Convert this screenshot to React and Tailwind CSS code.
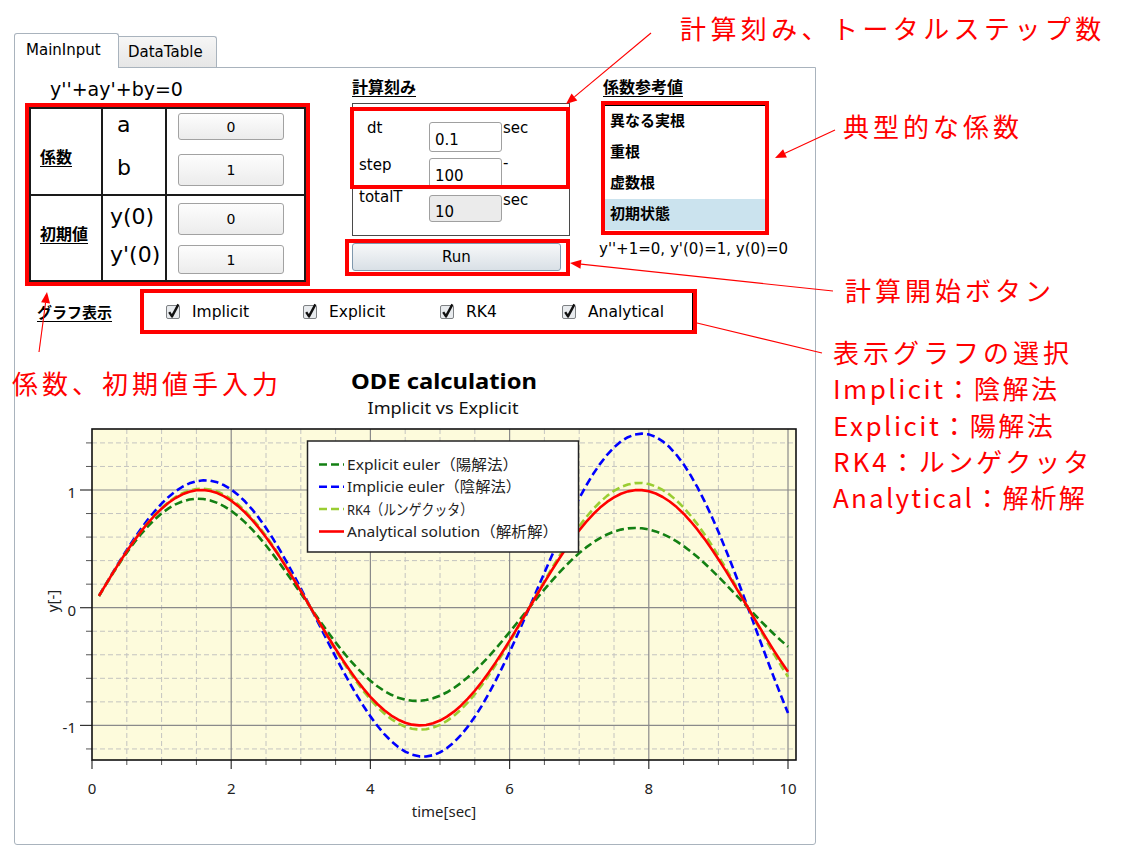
import React from "react";

const X = (t) => 92 + t * 69.6;
const Y = (v) => 607.7 - v * 117.7;

function curve(k) {
  let d = "";
  for (let i = 1; i <= 100; i++) {
    const t = i * 0.1;
    const v = Math.exp(k * t) * Math.sin(t);
    d += (i === 1 ? "M" : "L") + X(t).toFixed(2) + " " + Y(v).toFixed(2) + " ";
  }
  return d;
}

function Arrow({ x1, y1, x2, y2, head = true }) {
  const dx = x2 - x1;
  const dy = y2 - y1;
  const L = Math.hypot(dx, dy);
  const ux = dx / L;
  const uy = dy / L;
  const hl = 11;
  const hw = 4.5;
  const bx = x2 - ux * hl;
  const by = y2 - uy * hl;
  const pts = `${x2},${y2} ${bx - uy * hw},${by + ux * hw} ${bx + uy * hw},${by - ux * hw}`;
  return (
    <g>
      <line x1={x1} y1={y1} x2={head ? bx : x2} y2={head ? by : y2} stroke="#ff0000" strokeWidth="1.1" />
      {head && <polygon points={pts} fill="#ff0000" />}
    </g>
  );
}

function Chart() {
  const minorX = [];
  for (let i = 1; i <= 20; i++) if (i % 4 !== 0) minorX.push(i * 0.5);
  const majorX = [2, 4, 6, 8, 10];
  const minorY = [-1.2, -0.8, -0.6, -0.4, -0.2, 0.2, 0.4, 0.6, 0.8, 1.2, 1.4];
  const majorY = [-1, 0, 1];
  const top = 429;
  const bottom = 760;
  const left = 92;
  const right = 796;
  const legend = [
    { c: "#138013", dash: "8 4", label: "Explicit euler（陽解法）", y: 464.5, w: 171 },
    { c: "#0000ff", dash: "8 4", label: "Implicie euler（陰解法）", y: 486.8, w: 174 },
    { c: "#9acd32", dash: "8 4", label: "RK4（ルンゲクッタ）", y: 509, w: 126 },
    { c: "#ff0000", dash: null, label: "Analytical solution（解析解）", y: 531.5, w: 211 },
  ];
  const ff = "'Noto Sans','Noto Sans CJK JP',sans-serif";
  return (
    <svg width="800" height="504" viewBox="15 340 800 504" className="block" fontFamily={ff}>
      <defs>
        <clipPath id="plotclip">
          <rect x={left} y={top} width={right - left} height={bottom - top} />
        </clipPath>
      </defs>
      <text x="444" y="388.5" textAnchor="middle" fontSize="22" fontWeight="700" fill="#000" textLength="186" lengthAdjust="spacingAndGlyphs">
        ODE calculation
      </text>
      <text x="443" y="414" textAnchor="middle" fontSize="16" fill="#111" textLength="151" lengthAdjust="spacingAndGlyphs">
        Implicit vs Explicit
      </text>
      <rect x={left} y={top} width={right - left} height={bottom - top} fill="#fdfbdc" />
      {minorX.map((t) => (
        <line key={"mx" + t} x1={X(t)} x2={X(t)} y1={top} y2={bottom} stroke="#c4c4c0" strokeWidth="1" strokeDasharray="5 3" />
      ))}
      {minorY.map((v) => (
        <line key={"my" + v} x1={left} x2={right} y1={Y(v)} y2={Y(v)} stroke="#c4c4c0" strokeWidth="1" strokeDasharray="5 3" />
      ))}
      {majorX.map((t) => (
        <line key={"Mx" + t} x1={X(t)} x2={X(t)} y1={top} y2={bottom} stroke="#8a8a8a" strokeWidth="1.2" />
      ))}
      {majorY.map((v) => (
        <line key={"My" + v} x1={left} x2={right} y1={Y(v)} y2={Y(v)} stroke="#8a8a8a" strokeWidth="1.2" />
      ))}
      {minorY.map((v) => (
        <line key={"ty" + v} x1={86} x2={left} y1={Y(v)} y2={Y(v)} stroke="#555" strokeWidth="1" />
      ))}
      {majorY.map((v) => (
        <line key={"tY" + v} x1={80} x2={left} y1={Y(v)} y2={Y(v)} stroke="#333" strokeWidth="1.2" />
      ))}
      {minorX.map((t) => (
        <line key={"tx" + t} x1={X(t)} x2={X(t)} y1={bottom} y2={bottom + 5} stroke="#555" strokeWidth="1" />
      ))}
      {[0, 2, 4, 6, 8, 10].map((t) => (
        <line key={"tX" + t} x1={X(t)} x2={X(t)} y1={bottom} y2={bottom + 9} stroke="#333" strokeWidth="1.2" />
      ))}
      <rect x={left} y={top} width={right - left} height={bottom - top} fill="none" stroke="#111" strokeWidth="1.6" />
      <g clipPath="url(#plotclip)" fill="none" strokeLinecap="butt" strokeLinejoin="round">
        <path d={curve(0.0497)} stroke="#0000ff" strokeWidth="2.6" strokeDasharray="8 4" />
        <path d={curve(-0.0497)} stroke="#138013" strokeWidth="2.6" strokeDasharray="8 4" />
        <path d={curve(0.0075)} stroke="#9acd32" strokeWidth="2.6" strokeDasharray="8 4" />
        <path d={curve(0)} stroke="#ff0000" strokeWidth="2.6" />
      </g>
      {[1, 0, -1].map((v) => (
        <text key={"ly" + v} x="76" y={Y(v) + 8} textAnchor="end" fontSize="15" fill="#222">
          {v}
        </text>
      ))}
      {[0, 2, 4, 6, 8, 10].map((t) => (
        <text key={"lx" + t} x={X(t)} y="793.5" textAnchor="middle" fontSize="15" fill="#222">
          {t}
        </text>
      ))}
      <text x="444" y="817" textAnchor="middle" fontSize="15" fill="#222">
        time[sec]
      </text>
      <text x="0" y="0" transform="translate(58 601) rotate(-90)" textAnchor="middle" fontSize="15" fill="#222">
        y[-]
      </text>
      <rect x="307.5" y="441" width="271" height="111" fill="#ffffff" stroke="#222" strokeWidth="1.5" />
      {legend.map((e) => (
        <g key={e.label}>
          <line x1="319" x2="344" y1={e.y} y2={e.y} stroke={e.c} strokeWidth="2.6" strokeDasharray={e.dash || undefined} />
          <text x="347" y={e.y + 5.5} fontSize="15" fill="#222" textLength={e.w} lengthAdjust="spacingAndGlyphs">
            {e.label}
          </text>
        </g>
      ))}
    </svg>
  );
}

function ValueBox({ className, children }) {
  return (
    <div className={"w-[106px] flex items-center justify-center border border-[#a2a2a2] rounded-[3px] bg-gradient-to-b from-[#fdfdfd] to-[#ececec] text-[14px] leading-[16px] " + className}>
      {children}
    </div>
  );
}

function Check({ label, w }) {
  return (
    <div className={"flex items-center " + w}>
      <svg width="14" height="14" viewBox="0 0 14 14" className="overflow-visible shrink-0">
        <rect x="0.5" y="0.5" width="13" height="13" rx="1.5" fill="#e8ebee" stroke="#7e8184" />
        <path d="M3.2 7.2 L6 11.4 L12.4 -0.6" stroke="#111" strokeWidth="2.4" fill="none" strokeLinejoin="round" />
      </svg>
      <span className="ml-[12px] text-[15.5px] leading-[20px]">{label}</span>
    </div>
  );
}

export default function App() {
  const red = "border-[#ff0000]";
  const line = "border-[#1a1a1a]";
  return (
    <div className="relative w-[1122px] h-[853px] bg-white overflow-hidden text-black font-['DejaVu_Sans','Noto_Sans_CJK_JP',sans-serif]">
      <div className="pl-[14px] pt-[33px] w-[816px]">
        <div className="flex items-end h-[34px]">
          <div className="relative z-10 w-[105px] h-[35px] -mb-px border border-b-0 border-[#a9b3bd] rounded-t-[3px] bg-white pl-[11px] pt-[6px] text-[15px] leading-[20px]">
            MainInput
          </div>
          <div className="w-[98px] h-[31px] border border-l-0 border-b-0 border-[#a9b3bd] rounded-tr-[3px] bg-gradient-to-b from-[#f6f6f6] to-[#e6e6e6] pl-[9px] pt-[5px] text-[15px] leading-[20px]">
            DataTable
          </div>
        </div>
        <div className="w-[802px] h-[778px] border border-[#a9b3bd] rounded-b-[3px] bg-white">
          {/* top section */}
          <div className="flex h-[221px] pl-[10px]">
            {/* column 1 */}
            <div className="w-[285px] shrink-0">
              <div className="h-[35px] pt-[11px] pl-[25px] text-[19px] leading-[20px]">{"y''+ay'+by=0"}</div>
              <div className={"h-[183px] border-4 " + red}>
                <div className={"h-full border-2 flex flex-col " + line}>
                  <div className={"flex h-[87px] border-b-2 " + line}>
                    <div className={"w-[72px] border-r-2 pl-[9px] pt-[37px] " + line}>
                      <span className="text-[16px] leading-[20px] font-bold underline underline-offset-[3px]">係数</span>
                    </div>
                    <div className={"w-[64px] border-r-2 pl-[14px] text-[22px] " + line}>
                      <div className="mt-[3px] h-[26px] leading-[26px]">a</div>
                      <div className="mt-[17px] h-[26px] leading-[26px]">b</div>
                    </div>
                    <div className="flex-1 pl-[11px]">
                      <ValueBox className="mt-[4px] h-[27px]">0</ValueBox>
                      <ValueBox className="mt-[14px] h-[32px]">1</ValueBox>
                    </div>
                  </div>
                  <div className="flex flex-1">
                    <div className={"w-[72px] border-r-2 pl-[9px] pt-[27px] " + line}>
                      <span className="text-[16px] leading-[20px] font-bold underline underline-offset-[3px]">初期値</span>
                    </div>
                    <div className={"w-[64px] border-r-2 pl-[7px] text-[22px] " + line}>
                      <div className="mt-[8px] h-[26px] leading-[26px]">y(0)</div>
                      <div className="mt-[12px] h-[26px] leading-[26px]">{"y'(0)"}</div>
                    </div>
                    <div className="flex-1 pl-[11px]">
                      <ValueBox className="mt-[7px] h-[32px]">0</ValueBox>
                      <ValueBox className="mt-[10px] h-[29px]">1</ValueBox>
                    </div>
                  </div>
                </div>
              </div>
            </div>
            {/* column 2 */}
            <div className="ml-[35px] w-[225px] shrink-0">
              <div className="h-[35px] pt-[10px] pl-[7px] leading-[20px]">
                <span className="text-[16px] font-bold underline underline-offset-[3px]">計算刻み</span>
              </div>
              <div className="relative ml-[7px] w-[218px] h-[133px] border border-[#4a4a4a] text-[15px]">
                <div className="flex h-[54px]">
                  <div className="w-[76px] pl-[14px] pt-[14px] leading-[20px]">dt</div>
                  <div className="mt-[18px] w-[73px] h-[30px] border border-[#a0a0a0] rounded-[3px] bg-white pl-[5px] pt-[8px] leading-[18px]">0.1</div>
                  <div className="pl-[1px] pt-[14px] leading-[20px]">sec</div>
                </div>
                <div className="flex h-[35px]">
                  <div className="w-[76px] pl-[6px] leading-[14px]">step</div>
                  <div className="w-[73px] h-[30px] border border-[#a0a0a0] rounded-[3px] bg-white pl-[5px] pt-[8px] leading-[18px]">100</div>
                  <div className="pl-[1px] leading-[10px]">-</div>
                </div>
                <div className="flex">
                  <div className="w-[76px] pl-[6px] leading-[8px]">totalT</div>
                  <div className="mt-[2px] w-[73px] h-[27px] border border-[#a0a0a0] rounded-[3px] bg-[#ebebeb] pl-[5px] pt-[7px] leading-[18px]">10</div>
                  <div className="pl-[1px] leading-[14px]">sec</div>
                </div>
                <div className={"absolute left-[-3px] top-[3px] w-[220px] h-[82px] border-4 " + red}></div>
              </div>
              <div className={"mt-[3px] w-[225px] h-[37px] border-4 " + red}>
                <div className="ml-[3px] w-[209px] h-[28px] flex items-center justify-center border border-[#7f98ad] rounded-[3px] bg-gradient-to-b from-[#f7f8f9] to-[#d9e0e6] text-[15px]">
                  Run
                </div>
              </div>
            </div>
            {/* column 3 */}
            <div className="ml-[29px] w-[216px] shrink-0">
              <div className="h-[33px] pt-[10px] pl-[4px] leading-[20px]">
                <span className="text-[16px] font-bold underline underline-offset-[3px]">係数参考値</span>
              </div>
              <div className={"ml-[2px] w-[168px] h-[134px] border-4 " + red}>
                <div className="border-t border-black text-[15px] font-bold">
                  <div className="h-[31px] pl-[5px] leading-[31px]">異なる実根</div>
                  <div className="h-[31px] pl-[5px] leading-[31px]">重根</div>
                  <div className="h-[31px] pl-[5px] leading-[31px]">虚数根</div>
                  <div className="h-[31px] pl-[5px] leading-[31px] bg-[#cbe3ee]">初期状態</div>
                </div>
              </div>
              <div className="pt-[4px] leading-[20px] text-[15px] whitespace-nowrap">{"y''+1=0, y'(0)=1, y(0)=0"}</div>
            </div>
          </div>
          {/* checkbox row */}
          <div className="flex h-[45px]">
            <div className="w-[125px] shrink-0 pl-[22px] pt-[14px] leading-[20px]">
              <span className="text-[15px] font-bold underline underline-offset-[3px]">グラフ表示</span>
            </div>
            <div className={"w-[557px] h-[45px] border-4 " + red}>
              <div className="h-full border-r border-black flex items-center pl-[22px]">
                <Check label="Implicit" w="w-[137px]" />
                <Check label="Explicit" w="w-[137px]" />
                <Check label="RK4" w="w-[122px]" />
                <Check label="Analytical" w="" />
              </div>
            </div>
          </div>
          <div className="mt-[6px]">
            <Chart />
          </div>
        </div>
      </div>

      {/* annotation arrows */}
      <svg className="absolute left-0 top-0 pointer-events-none" width="1122" height="853">
        <Arrow x1={651} y1={33} x2={566} y2={104} />
        <Arrow x1={835} y1={130} x2={775} y2={158} />
        <Arrow x1={833} y1={291} x2={570} y2={263} />
        <Arrow x1={822} y1={353} x2={697} y2={323} head={false} />
        <Arrow x1={39} y1={352} x2={47} y2={292} />
      </svg>

      {/* annotation texts */}
      <div className="absolute left-[680px] top-[13px] text-[#ff0000] text-[26px] leading-[30px] tracking-[4.4px] whitespace-nowrap font-['Noto_Sans_CJK_JP',sans-serif]">
        計算刻み、トータルステップ数
      </div>
      <div className="absolute left-[843px] top-[111px] text-[#ff0000] text-[26px] leading-[30px] tracking-[4px] whitespace-nowrap font-['Noto_Sans_CJK_JP',sans-serif]">
        典型的な係数
      </div>
      <div className="absolute left-[845px] top-[275px] text-[#ff0000] text-[26px] leading-[30px] tracking-[4px] whitespace-nowrap font-['Noto_Sans_CJK_JP',sans-serif]">
        計算開始ボタン
      </div>
      <div className="absolute left-[833px] top-[334px] text-[#ff0000] text-[26px] leading-[36.3px] whitespace-nowrap font-['Noto_Sans_CJK_JP',sans-serif]">
        <div className="tracking-[4px]">表示グラフの選択</div>
        <div className="tracking-[2.5px]">Implicit：陰解法</div>
        <div className="tracking-[2.5px]">Explicit：陽解法</div>
        <div className="tracking-[3px]">RK4：ルンゲクッタ</div>
        <div className="tracking-[2.2px]">Analytical：解析解</div>
      </div>
      <div className="absolute left-[12px] top-[368px] text-[#ff0000] text-[26px] leading-[30px] tracking-[4px] whitespace-nowrap font-['Noto_Sans_CJK_JP',sans-serif]">
        係数、初期値手入力
      </div>
    </div>
  );
}
